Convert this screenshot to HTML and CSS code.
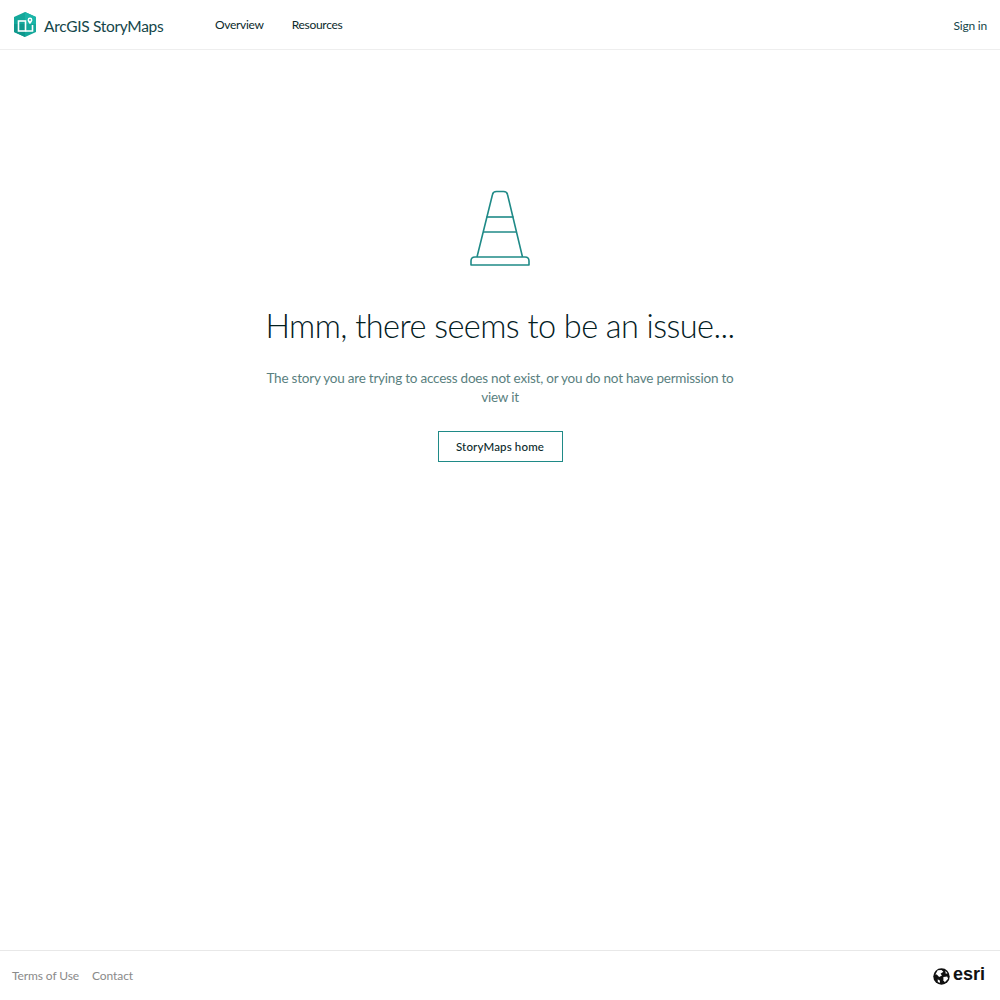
FILE: index.html
```html
<!DOCTYPE html>
<html lang="en">
  <head>
    <meta charset="UTF-8" />
    <meta name="viewport" content="width=device-width, initial-scale=1.0" />
    <title>ArcGIS StoryMaps</title>
    <link rel="stylesheet" href="styles.css">
  </head>

  <body>
    <header class="top-bar">
      <a class="brand" href="#">
        <svg class="brand-icon" viewBox="0 0 22 25" width="22" height="25">
          <path d="M11 0 L22 5 V20 L11 25 L0 20 V5 Z" fill="#14a89b" />
          <path d="M11 0 L22 5 V12 L11 12 Z" fill="#1bb5a8" />
          <path d="M11 25 L0 20 V12 L11 12 Z" fill="#0f978c" />
          <rect x="4.500" y="9" width="7" height="10" fill="none" stroke="#fff" stroke-width="1.6" />
          <path d="M11.500 19 H18.500 V13" fill="none" stroke="#fff" stroke-width="1.6" />
          <path d="M16 5.500 a2.400 2.400 0 0 1 2.400 2.400 c0 1.600 -2.400 4.100 -2.400 4.100 s-2.400 -2.500 -2.400 -4.100 a2.400 2.400 0 0 1 2.400 -2.400 Z" fill="#fff" />
          <circle cx="16" cy="7.900" r="0.900" fill="#14a89b" />
        </svg>
        <span class="brand-name">ArcGIS StoryMaps</span>
      </a>
      <nav class="main-nav">
        <a href="#">Overview</a>
        <a href="#">Resources</a>
      </nav>
      <a class="sign-in" href="#">Sign in</a>
    </header>

    <main class="error-page">
      <svg class="cone" viewBox="0 0 60 76" width="60" height="76">
        <g fill="none" stroke="#1f8a87" stroke-width="1.6" stroke-linejoin="round">
          <path d="M7 67 L22.500 4.500 Q23 1.500 26.500 1.500 H33.500 Q37 1.500 37.500 4.500 L52.500 67" />
          <path d="M16.500 27 H43.500" />
          <path d="M13 42 H47" />
          <path d="M5 67 H55 Q59 67 59 71 V75 H1 V71 Q1 67 5 67 Z" />
        </g>
      </svg>
      <h1>Hmm, there seems to be an issue...</h1>
      <p>The story you are trying to access does not exist, or you do not have permission to view it</p>
      <a class="home-btn" href="#">StoryMaps home</a>
    </main>

    <footer class="bottom-bar">
      <nav class="footer-nav">
        <a href="#">Terms of Use</a>
        <a href="#">Contact</a>
      </nav>
      <a class="esri" href="#">
        <svg class="globe" viewBox="0 0 18 18" width="17" height="17">
          <circle cx="9" cy="9" r="8.700" fill="#111" />
          <path d="M5 2.500 L9 2 L11 4 L8 6 L9.500 8 L6.500 9.500 L4 7 L2.500 7 Z" fill="#fff" />
          <path d="M11 9.500 L15 9 L16 11.500 L12.500 15 L11 13 Z" fill="#fff" />
          <path d="M13 3 L15.500 5.500 L13.500 6 Z" fill="#fff" />
          <path d="M5 12 L7.500 13.500 L7 16 L5 14.500 Z" fill="#fff" />
        </svg>
        <span class="esri-name">esri</span>
      </a>
    </footer>
  </body>
</html>
```

FILE: styles.css
```css
* {
  box-sizing: border-box;
}

html, body {
  height: 100%;
}

body {
  margin: 0;
  display: flex;
  flex-direction: column;
  background: #fff;
  color: #0b2a2c;
  font-family: "Lato", "Noto Sans", sans-serif;
}

a {
  color: inherit;
  text-decoration: none;
}

.top-bar {
  height: 50px;
  flex: none;
  display: flex;
  align-items: center;
  padding: 0 13px 0 14px;
  border-bottom: 1px solid #eeeeee;
}

.brand {
  display: flex;
  align-items: center;
  gap: 8px;
  width: 201px;
}

.brand-icon {
  flex: none;
}

.brand-name {
  font-size: 15.500px;
  letter-spacing: -0.3px;
  color: #14464a;
  padding-top: 2px;
}

.main-nav {
  display: flex;
  gap: 28px;
  font-size: 12px;
  letter-spacing: -0.3px;
}

.sign-in {
  margin-left: auto;
  font-size: 12px;
  letter-spacing: -0.2px;
  color: #14464a;
  padding-top: 1px;
}

.error-page {
  flex: 1;
  display: flex;
  flex-direction: column;
  align-items: center;
  padding-top: 140px;
}

.cone {
  display: block;
}

h1 {
  margin: 40px 0 0;
  font-size: 32.500px;
  font-weight: 300;
  line-height: 40px;
  letter-spacing: -0.55px;
  color: #04201f;
}

p {
  width: 480px;
  margin: 23px 0 0;
  font-size: 13.500px;
  letter-spacing: -0.22px;
  line-height: 19px;
  text-align: center;
  color: #5a7f80;
}

.home-btn {
  margin-top: 24px;
  width: 125px;
  height: 31px;
  display: flex;
  align-items: center;
  justify-content: center;
  border: 1px solid #1f8a87;
  font-size: 11.500px;
  font-weight: 500;
  letter-spacing: 0.15px;
}

.bottom-bar {
  height: 50px;
  flex: none;
  display: flex;
  align-items: center;
  justify-content: space-between;
  padding: 0 15px 0 12px;
  border-top: 1px solid #e8e8e8;
}

.footer-nav {
  display: flex;
  gap: 13px;
  font-size: 12px;
  letter-spacing: -0.1px;
  color: #8a8a8a;
}

.esri {
  display: flex;
  align-items: center;
  gap: 3px;
  font-family: "Liberation Sans", sans-serif;
  font-size: 18px;
  font-weight: 700;
  color: #111;
}

.globe {
  margin-top: 1px;
}

.esri-name {
  margin-bottom: 3px;
}
```
